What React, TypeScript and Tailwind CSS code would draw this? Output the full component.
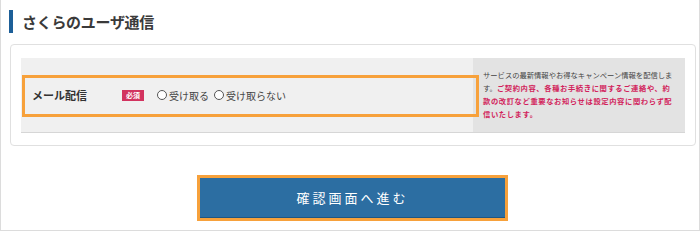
export default function App() {
  return (
    <div className="relative w-[700px] h-[231px] bg-white border-x border-b border-[#dcdcdc] font-['Noto_Sans_CJK_JP',sans-serif] text-[#333]">
      {/* Title */}
      <div className="flex items-center pt-[10px] pl-[8px]">
        <div className="w-[4px] h-[23px] bg-[#1d5f98]" />
        <h2 className="ml-[9px] text-[15px] font-bold leading-none tracking-[-0.3px] text-[#3a3a3a]">
          さくらのユーザ通信
        </h2>
      </div>

      {/* Card */}
      <div className="ml-[9px] mt-[11px] w-[686px] h-[102px] rounded-[4px] border border-[#e0e0e0] px-[10px] pt-[13px]">
        <div className="flex h-[75px] border-b border-[#d6d6d6]">
          <div className="flex w-[452px] items-center bg-[#f0f0f0] pl-[11px]">
            <span className="w-[90px] text-[11px] font-bold">メール配信</span>
            <span className="flex h-[11px] w-[22px] items-center justify-center bg-[#d2335f] text-[7px] font-bold leading-none text-white">
              必須
            </span>
            <label className="ml-[13px] flex items-center text-[10px] text-[#444]">
              <span className="mr-[2px] inline-block h-[10px] w-[10px] rounded-full border border-[#555] bg-white" />
              受け取る
            </label>
            <label className="ml-[5px] flex items-center text-[10px] text-[#444]">
              <span className="mr-[2px] inline-block h-[10px] w-[10px] rounded-full border border-[#555] bg-white" />
              受け取らない
            </label>
          </div>
          <div className="flex w-[212px] flex-col justify-center bg-[#e3e3e3] pl-[10px] text-[7.3px] leading-[13px] whitespace-nowrap">
            <div className="text-[#444]">サービスの最新情報やお得なキャンペーン情報を配信しま</div>
            <div>
              <span className="text-[#444]">す。</span>
              <span className="font-bold tracking-[0.6px] text-[#d21f5c]">ご契約内容、各種お手続きに関するご連絡や、約</span>
            </div>
            <div className="font-bold tracking-[0.6px] text-[#d21f5c]">款の改訂など重要なお知らせは設定内容に関わらず配</div>
            <div className="font-bold tracking-[0.6px] text-[#d21f5c]">信いたします。</div>
          </div>
        </div>
      </div>

      {/* Button */}
      <div className="ml-[196px] mt-[29px] w-[311px] border-[3px] border-[#f7a13b]">
        <button className="flex h-[40px] w-full items-center justify-center border-b border-[#1f5682] bg-[#2c6ea2] text-[13px] tracking-[3px] text-white">
          確認画面へ進む
        </button>
      </div>

      {/* Highlight overlay */}
      <div className="absolute left-[21px] top-[75px] h-[42px] w-[457px] border-[3px] border-[#f7a13b]" />
    </div>
  );
}
